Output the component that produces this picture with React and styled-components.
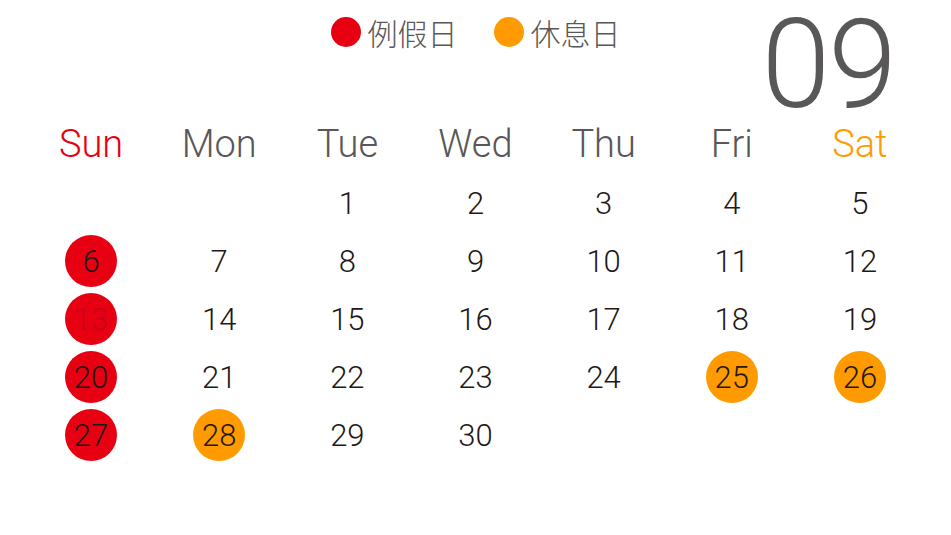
import React from 'react';
import styled, { createGlobalStyle } from 'styled-components';

const RED = '#e60012';
const ORANGE = '#ff9b00';
const GRAY = '#595757';
const INK = '#231815';

const GlobalStyle = createGlobalStyle`
  html, body {
    margin: 0;
    padding: 0;
    background: #fff;
  }
  body {
    font-family: Roboto, "Noto Sans CJK TC", sans-serif;
    font-weight: 300;
  }
`;

const Page = styled.div`
  width: 951px;
  height: 535px;
  background: #fff;
  overflow: hidden;
`;

const Top = styled.header`
  height: 114px;
  display: grid;
  grid-template-columns: 1fr auto 1fr;
  align-items: start;
`;

const Legend = styled.div`
  grid-column: 2;
  display: flex;
  align-items: center;
  gap: 36px;
  padding-top: 15px;
`;

const LegendItem = styled.div`
  display: flex;
  align-items: center;
  gap: 7px;
  font-family: "Noto Sans CJK TC", sans-serif;
  font-weight: 300;
  font-size: 30px;
  line-height: 34px;
  color: ${GRAY};
`;

const Dot = styled.span`
  width: 30px;
  height: 30px;
  border-radius: 50%;
  background: ${(p) => p.$color};
`;

const Month = styled.div`
  grid-column: 3;
  justify-self: end;
  padding-right: 56px;
  margin-top: 16px;
  height: 98px;
  font-size: 124px;
  line-height: 98px;
  color: ${GRAY};
  letter-spacing: -2px;
`;

const Grid = styled.div`
  margin: 0 27px 0 27px;
  display: grid;
  grid-template-columns: repeat(7, 1fr);
  grid-template-rows: 60px;
  grid-auto-rows: 58px;
`;

const Weekday = styled.div`
  display: flex;
  align-items: center;
  justify-content: center;
  font-size: 38px;
  color: ${(p) => p.$color || GRAY};
`;

const Cell = styled.div`
  display: flex;
  align-items: center;
  justify-content: center;
`;

const Day = styled.span`
  width: 52px;
  height: 52px;
  border-radius: 50%;
  display: flex;
  align-items: center;
  justify-content: center;
  font-size: 31px;
  color: ${(p) => (p.$faded ? '#c8001a' : INK)};
  background: ${(p) => p.$bg || 'transparent'};
`;

const weekdays = [
  { label: 'Sun', color: RED },
  { label: 'Mon' },
  { label: 'Tue' },
  { label: 'Wed' },
  { label: 'Thu' },
  { label: 'Fri' },
  { label: 'Sat', color: ORANGE },
];

const holidays = [6, 13, 20, 27];
const restDays = [25, 26, 28];

export default function App() {
  const days = [null, null];
  for (let d = 1; d <= 30; d++) days.push(d);

  return (
    <Page>
      <GlobalStyle />
      <Top>
        <Legend>
          <LegendItem><Dot $color={RED} />例假日</LegendItem>
          <LegendItem><Dot $color={ORANGE} />休息日</LegendItem>
        </Legend>
        <Month>09</Month>
      </Top>
      <Grid>
        {weekdays.map((w) => (
          <Weekday key={w.label} $color={w.color}>{w.label}</Weekday>
        ))}
        {days.map((d, i) => (
          <Cell key={i}>
            {d && (
              <Day
                $bg={holidays.includes(d) ? RED : restDays.includes(d) ? ORANGE : null}
                $faded={d === 13}
              >
                {d}
              </Day>
            )}
          </Cell>
        ))}
      </Grid>
    </Page>
  );
}
